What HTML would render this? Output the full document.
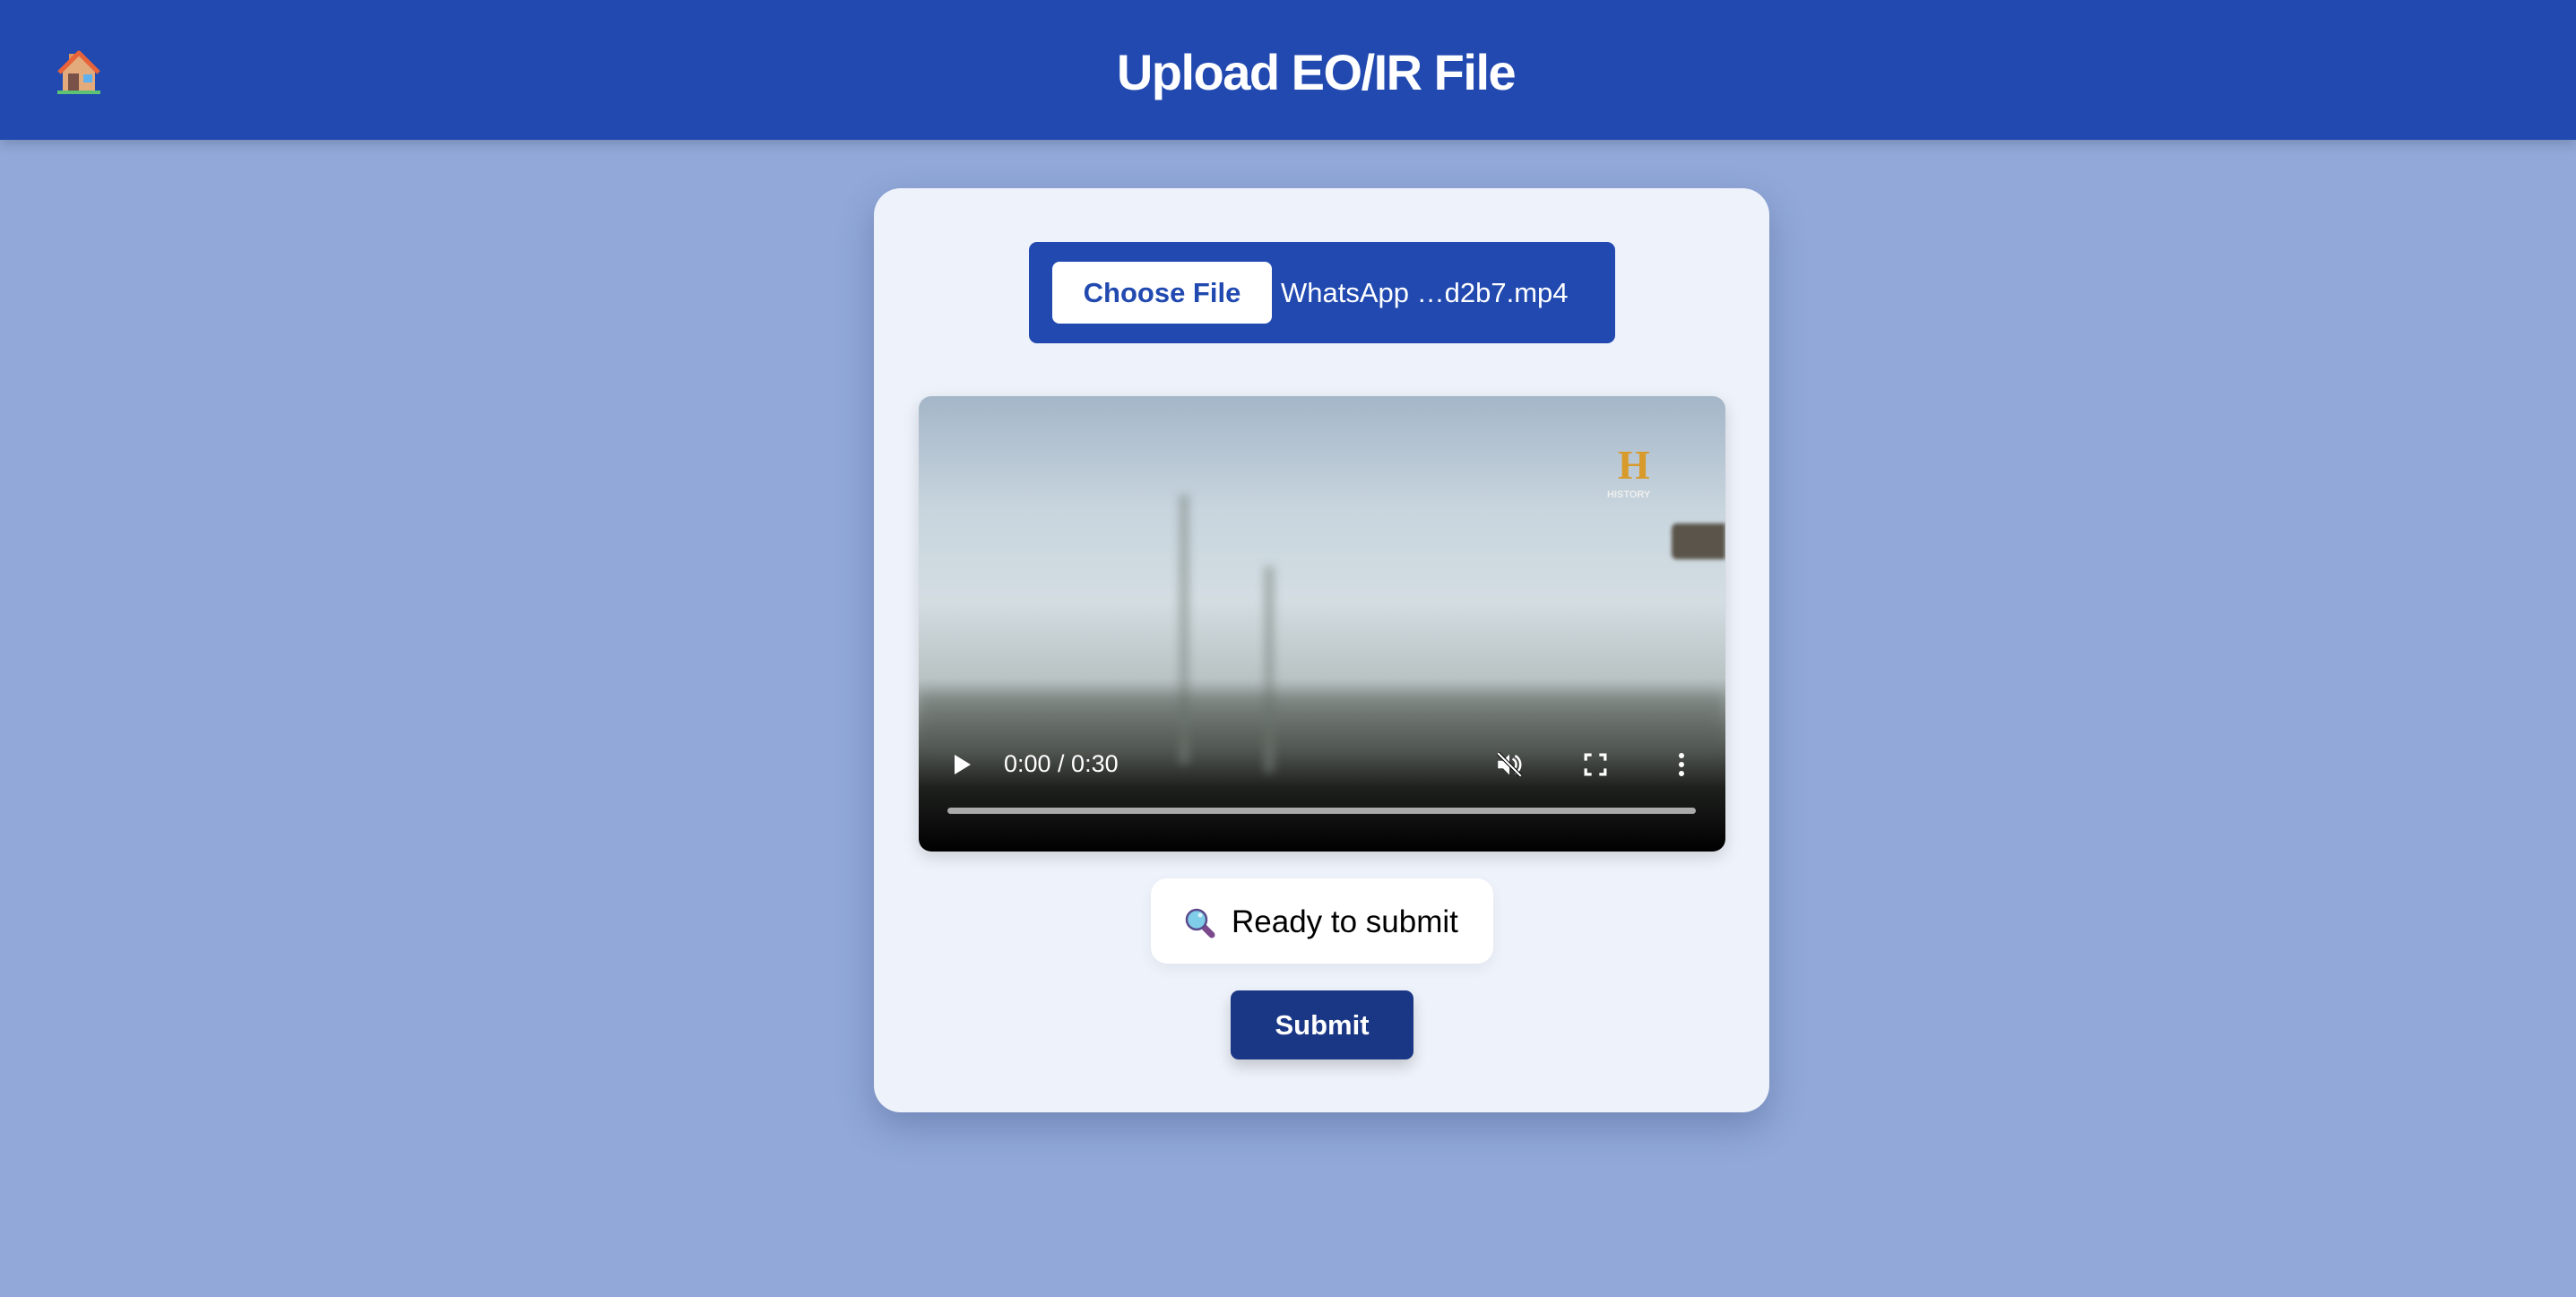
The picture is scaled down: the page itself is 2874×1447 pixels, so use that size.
<!DOCTYPE html>
<html><head><meta charset="utf-8"><style>
*{margin:0;padding:0;box-sizing:border-box}
body{width:2874px;height:1447px;background:#91a8d8;position:relative;overflow:hidden;font-family:"Liberation Sans",sans-serif}
.hdr{position:absolute;left:0;top:0;width:2874px;height:156px;background:#2149b0;box-shadow:0 4px 12px rgba(0,0,0,.18)}
.title{position:absolute;left:1239px;top:46px;width:458px;text-align:center;color:#fff;font-size:56px;font-weight:bold;line-height:70px;letter-spacing:-1.5px}
.card{position:absolute;left:975px;top:210px;width:999px;height:1031px;background:#eef2fa;border-radius:30px;box-shadow:0 16px 40px rgba(40,60,110,.3)}
.file{position:absolute;left:1148px;top:270px;width:654px;height:113px;background:#2149b0;border-radius:9px}
.choose{position:absolute;left:1174px;top:292px;width:245px;height:69px;background:#fff;border-radius:8px;color:#2149b0;font-weight:bold;font-size:31px;line-height:69px;text-align:center}
.fname{position:absolute;left:1429px;top:292px;color:#fff;font-size:31px;line-height:69px}
.video{position:absolute;left:1025px;top:442px;width:900px;height:508px;border-radius:14px;overflow:hidden;background:linear-gradient(180deg,#a4b6c8 0%,#c8d5de 25%,#d3dde2 45%,#b9c3c4 62%,#5c625d 76%,#1e201e 86%,#000 100%);box-shadow:0 6px 18px rgba(0,0,0,.15)}
.time{position:absolute;left:1120px;top:834px;color:#fff;font-size:27px;line-height:36px}
.bar{position:absolute;left:1057px;top:901px;width:835px;height:7px;border-radius:4px;background:#aaa}
.status{position:absolute;left:1284px;top:980px;width:382px;height:95px;background:#fff;border-radius:18px;box-shadow:0 6px 16px rgba(0,0,0,.06)}
.stxt{position:absolute;left:1374px;top:1005px;font-size:35px;line-height:48px;color:#000}
.submit{position:absolute;left:1373px;top:1105px;width:204px;height:77px;background:#1a3786;border-radius:9px;color:#fff;font-weight:bold;font-size:31px;line-height:77px;text-align:center;box-shadow:0 8px 16px rgba(0,0,0,.18)}
</style></head><body>
<div class="hdr"></div>
<svg style="position:absolute;left:60px;top:55px" width="56" height="52" viewBox="0 0 56 52">
<rect x="17" y="5" width="7" height="18" fill="#d9925c"/>
<path d="M10 24 L28 6 L46 24 L46 46 L10 46Z" fill="#e3aa7c"/>
<path d="M6 26 L28 4 L50 26" fill="none" stroke="#e8623a" stroke-width="5" stroke-linejoin="round"/>
<rect x="16" y="27" width="12" height="19" fill="#7a5148"/>
<rect x="33" y="28" width="10" height="9" fill="#5fb0ee"/>
<rect x="4" y="46" width="48" height="4" fill="#5dc273"/>
</svg>
<div class="title">Upload EO/IR File</div>
<div class="card"></div>
<div class="file"></div>
<div class="choose">Choose File</div>
<div class="fname">WhatsApp …d2b7.mp4</div>
<div class="video">
<div style="position:absolute;left:780px;top:50px;color:#d99a2c;font:bold 46px 'Liberation Serif',serif">H</div>
<div style="position:absolute;left:768px;top:104px;color:#eee;font:bold 11px 'Liberation Sans'">HISTORY</div>
<div style="position:absolute;left:840px;top:142px;width:60px;height:40px;background:#5a544a;border-radius:6px 0 0 6px;filter:blur(2px)"></div>
<div style="position:absolute;left:290px;top:110px;width:12px;height:300px;background:#7b857e;opacity:.5;filter:blur(5px)"></div>
<div style="position:absolute;left:385px;top:190px;width:12px;height:230px;background:#7b857e;opacity:.5;filter:blur(5px)"></div>
<div style="position:absolute;left:0;top:330px;width:900px;height:60px;background:#4a5048;opacity:.35;filter:blur(8px)"></div>
</div>
<svg style="position:absolute;left:1063px;top:840px" width="22" height="26"><path d="M2 2 L20 13 L2 24Z" fill="#fff"/></svg>
<div class="time">0:00 / 0:30</div>
<svg style="position:absolute;left:1667px;top:836px" width="34" height="34" viewBox="0 0 24 24"><path d="M3 9v6h4l5 5V4L7 9H3z" fill="#fff"/><path d="M14.5 7.5a5 5 0 0 1 0 9M16.5 5a8 8 0 0 1 0 14" stroke="#fff" stroke-width="1.8" fill="none"/><path d="M3 3L21 21" stroke="#000" stroke-width="3"/><path d="M3 3L21 21" stroke="#fff" stroke-width="1.6"/></svg>
<svg style="position:absolute;left:1767px;top:840px" width="26" height="26" viewBox="0 0 24 24" fill="none" stroke="#fff" stroke-width="3"><path d="M2 8V2h6M16 2h6v6M22 16v6h-6M8 22H2v-6"/></svg>
<svg style="position:absolute;left:1870px;top:838px" width="12" height="30"><circle cx="6" cy="5" r="3" fill="#fff"/><circle cx="6" cy="15" r="3" fill="#fff"/><circle cx="6" cy="25" r="3" fill="#fff"/></svg>
<div class="bar"></div>
<div class="status"></div>
<svg style="position:absolute;left:1321px;top:1012px" width="36" height="36" viewBox="0 0 36 36"><line x1="21" y1="21" x2="31" y2="31" stroke="#7a4a8c" stroke-width="7" stroke-linecap="round"/><circle cx="14" cy="14" r="11" fill="#7fcde8" stroke="#5a4a8c" stroke-width="2.5"/><circle cx="18" cy="9" r="2.5" fill="#d6f1fb"/></svg>
<div class="stxt">Ready to submit</div>
<div class="submit">Submit</div>
</body></html>
